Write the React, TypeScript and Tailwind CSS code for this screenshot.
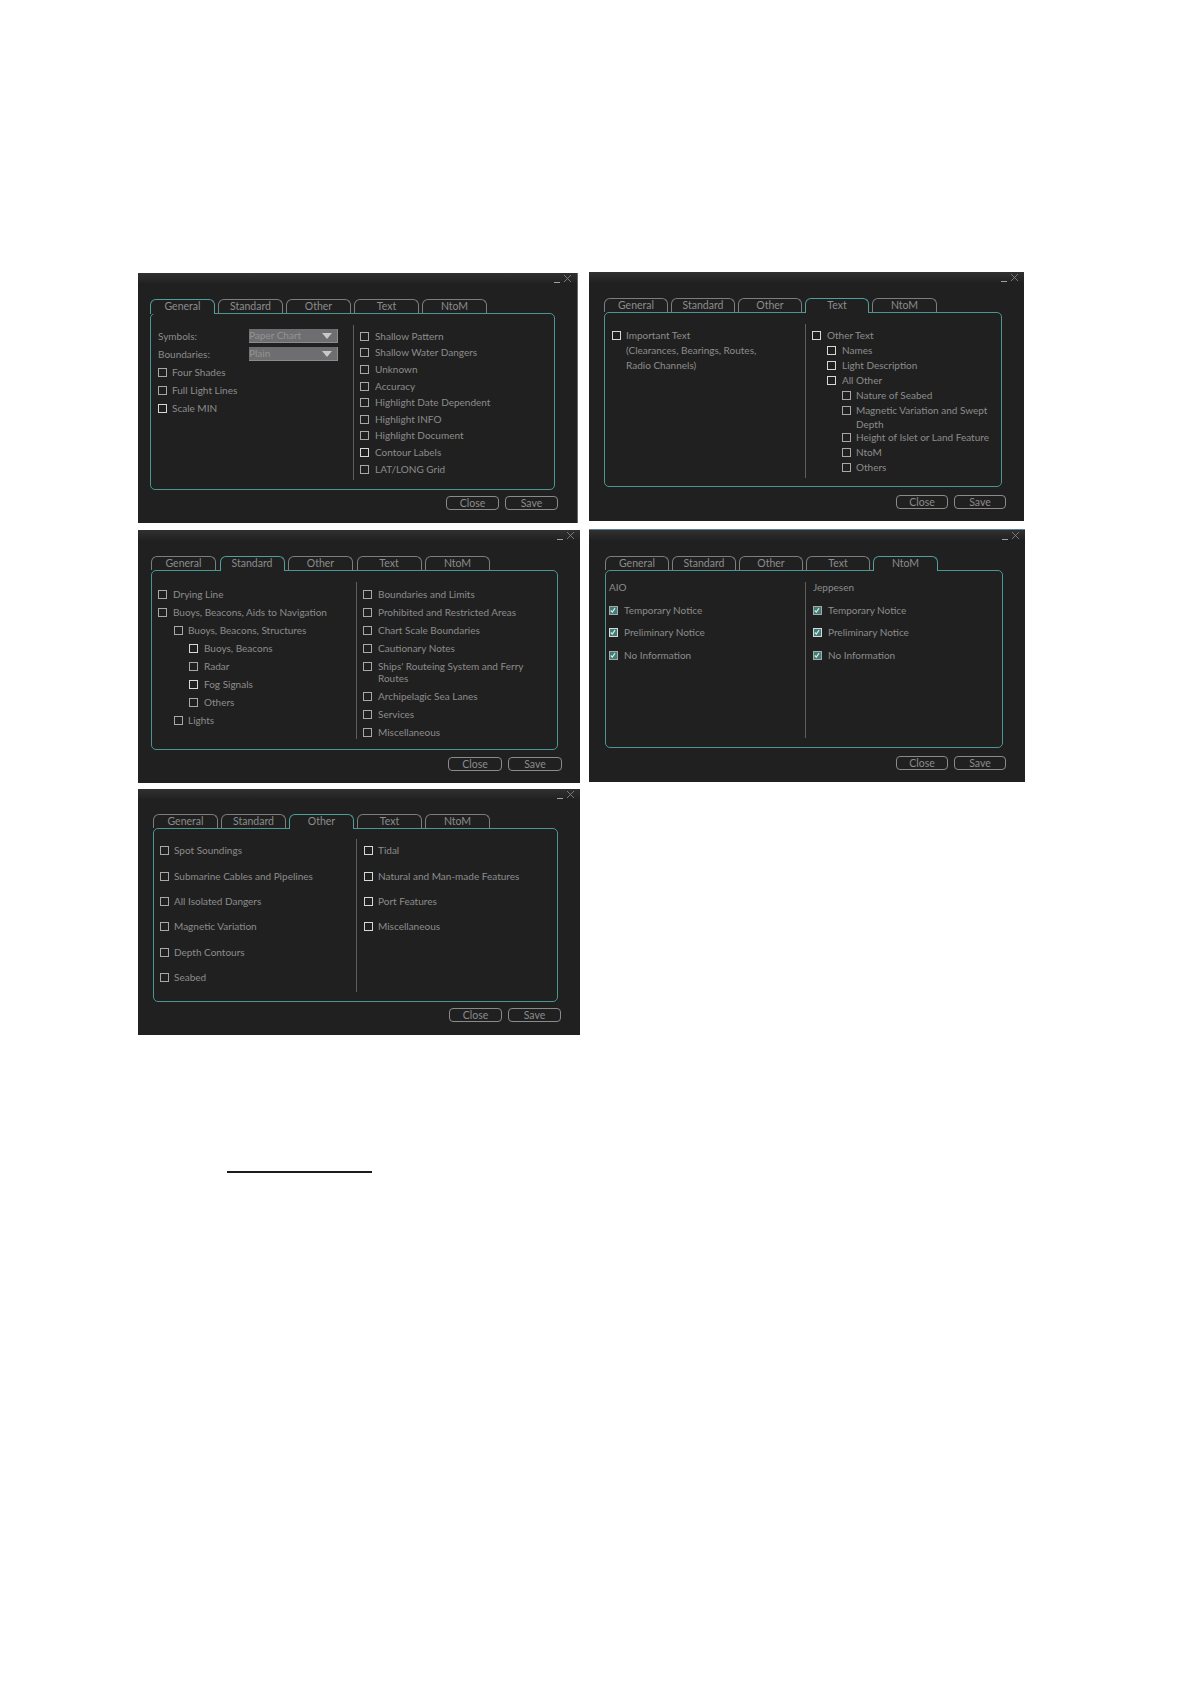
import React from "react";

const textColor = "text-[#8c8c8c]";

function Check({ on = false, bright = false }: { on?: boolean; bright?: boolean }) {
  return (
    <span className={`relative block w-[9px] h-[9px] shrink-0 border ${bright ? "border-[#d8d8d8]" : "border-[#a8a8a8]"} ${on ? "bg-[#3d7f78]" : ""}`}>
      {on && (
        <svg viewBox="0 0 9 9" className="absolute inset-0 w-[7px] h-[7px]">
          <path d="M1 4.5 L3 6.5 L6.5 1.5" fill="none" stroke="#eaeaea" strokeWidth="1.4" />
        </svg>
      )}
    </span>
  );
}

function Row({ label, className = "", on, bright }: { label: string; className?: string; on?: boolean; bright?: boolean }) {
  return (
    <div className={`flex items-center ${className}`}>
      <Check on={on} bright={bright} />
      <span className="whitespace-nowrap">{label}</span>
    </div>
  );
}

function Tab({ label, active, className }: { label: string; active: boolean; className: string }) {
  return (
    <div
      className={`h-[14px] flex items-center justify-center rounded-t-[6px] border border-b-0 bg-[#202020] text-[10.5px] leading-none ${
        active ? "relative z-10 -mb-px h-[15px] border-[#4f9f9c] pb-[2px]" : "border-[#7d7d7d] pb-px"
      } ${className}`}
    >
      {label}
    </div>
  );
}

function Panel({
  className,
  tabs,
  active,
  tabRow,
  frame,
  buttons,
  buttonGap,
  buttonW,
  children,
}: {
  className: string;
  tabs: string[];
  active: number;
  tabRow: string;
  frame: string;
  buttons: string;
  buttonGap?: string;
  buttonW: string;
  children: React.ReactNode;
}) {
  const names = ["General", "Standard", "Other", "Text", "NtoM"];
  return (
    <section className={`flex flex-col shrink-0 bg-[#202020] text-[10px] ${textColor} ${className}`}>
      <div className="h-[10px] shrink-0 bg-gradient-to-b from-[#303030] to-[#222222] flex justify-end items-end pr-[5px] text-[#9a9a9a]">
        <svg width="18" height="9" viewBox="0 0 18 9" className="block">
          <path d="M0 8.5 H6" stroke="#a0a0a0" strokeWidth="1" />
          <path d="M10 1 L17 8 M17 1 L10 8" stroke="#8c8c8c" strokeWidth="0.8" />
        </svg>
      </div>
      <div className={`flex ${tabRow}`}>
        {names.map((n, i) => (
          <Tab key={n} label={n} active={i === active} className={tabs[i]} />
        ))}
      </div>
      <div className={`flex border border-[#4a9693] rounded-[5px] ${frame}`}>{children}</div>
      <div className={`flex justify-end text-[10.5px] ${buttons} ${buttonGap ?? "gap-[6px]"}`}>
        <div className={`h-[14px] flex items-center justify-center rounded-[4px] border border-[#8a8a8a] leading-none ${buttonW}`}>Close</div>
        <div className={`h-[14px] flex items-center justify-center rounded-[4px] border border-[#8a8a8a] leading-none ${buttonW}`}>Save</div>
      </div>
    </section>
  );
}

function Select({ label }: { label: string }) {
  return (
    <div className="w-[89px] h-[14px] bg-[#6e6e70] border-b border-r border-[#8c8c8c] flex items-center justify-between pr-[5px] text-[#939393] leading-none">
      <span className="pb-[2px]">{label}</span>
      <span className="w-0 h-0 border-l-[5px] border-r-[5px] border-t-[6px] border-l-transparent border-r-transparent border-t-[#c8c8c8]" />
    </div>
  );
}

export default function App() {
  return (
    <div className="relative w-[1190px] h-[1684px] bg-white overflow-hidden font-['Lato',sans-serif]">
      <div className="pt-[272px] pl-[138px] flex gap-[11px]">
        {/* General */}
        <Panel
          className="mt-px w-[440px] h-[250px] border-r border-r-[#6a6a6a]"
          active={0}
          tabs={["w-[65px]", "w-[65px]", "w-[65px]", "w-[65px]", "w-[65px]"]}
          tabRow="mt-[16px] ml-[12px] gap-[3px]"
          frame="ml-[12px] w-[405px] h-[177px] pt-[11px]"
          buttons="mt-[6px] ml-[308px] w-[112px]"
          buttonW="w-[53px]"
        >
          <div className="w-[203px] h-[155px] border-r border-[#5e5e5e] pl-[7px] pr-[15px]">
            <div className="h-[18px] flex items-center justify-between mt-[2px]">
              <span>Symbols:</span>
              <Select label="Paper Chart" />
            </div>
            <div className="h-[18px] flex items-center justify-between">
              <span>Boundaries:</span>
              <Select label="Plain" />
            </div>
            <Row label="Four Shades" className="h-[18px] gap-[5px]" />
            <Row label="Full Light Lines" className="h-[18px] gap-[5px]" />
            <Row label="Scale MIN" className="h-[18px] gap-[5px]" bright />
          </div>
          <div className="pl-[6px] flex flex-col h-[155px] pt-[3px]">
            {["Shallow Pattern", "Shallow Water Dangers", "Unknown", "Accuracy", "Highlight Date Dependent", "Highlight INFO", "Highlight Document", "Contour Labels", "LAT/LONG Grid"].map((t) => (
              <Row key={t} label={t} className="h-[16.6px] gap-[6px]" bright={t === "Contour Labels"} />
            ))}
          </div>
        </Panel>

        {/* Text */}
        <Panel
          className="w-[435px] h-[249px]"
          active={3}
          tabs={["w-[64px]", "w-[64px]", "w-[64px]", "w-[64px]", "w-[65px]"]}
          tabRow="mt-[16px] ml-[15px] gap-[3px]"
          frame="ml-[15px] w-[398px] h-[175px] pt-[11px]"
          buttons="mt-[8px] ml-[306px] w-[111px]"
          buttonW="w-[52px]"
        >
          <div className="w-[201px] h-[154px] border-r border-[#5e5e5e] pl-[7px] pt-[4px]">
            <Row label="Important Text" className="h-[15px] gap-[5px]" bright />
            <div className="pl-[14px] h-[15px] flex items-center">(Clearances, Bearings, Routes,</div>
            <div className="pl-[14px] h-[15px] flex items-center">Radio Channels)</div>
          </div>
          <div className="pl-[6px] h-[154px] pt-[4px]">
            <Row label="Other Text" className="h-[15px] gap-[6px]" bright />
            <Row label="Names" className="h-[15px] gap-[6px] ml-[15px]" bright />
            <Row label="Light Description" className="h-[15px] gap-[6px] ml-[15px]" bright />
            <Row label="All Other" className="h-[15px] gap-[6px] ml-[15px]" bright />
            <Row label="Nature of Seabed" className="h-[15px] gap-[5px] ml-[30px]" />
            <Row label="Magnetic Variation and Swept" className="h-[15px] gap-[5px] ml-[30px]" />
            <div className="h-[12px] ml-[44px] flex items-center">Depth</div>
            <Row label="Height of Islet or Land Feature" className="h-[15px] gap-[5px] ml-[30px]" />
            <Row label="NtoM" className="h-[15px] gap-[5px] ml-[30px]" />
            <Row label="Others" className="h-[15px] gap-[5px] ml-[30px]" />
          </div>
        </Panel>
      </div>

      <div className="pl-[138px] flex gap-[9px]">
        {/* Standard */}
        <Panel
          className="mt-[7px] w-[442px] h-[253px]"
          active={1}
          tabs={["w-[65px]", "w-[65px]", "w-[65px]", "w-[65px]", "w-[65px]"]}
          tabRow="mt-[16px] ml-[13px] gap-[3.5px]"
          frame="ml-[13px] w-[407px] h-[180px] pt-[11px]"
          buttons="mt-[7px] ml-[310px] w-[114px]"
          buttonW="w-[54px]"
        >
          <div className="w-[205px] h-[157px] border-r border-[#5e5e5e] pl-[6px] pt-[3px]">
            <Row label="Drying Line" className="h-[18.1px] gap-[6px]" />
            <Row label="Buoys, Beacons, Aids to Navigation" className="h-[18.1px] gap-[6px]" />
            <Row label="Buoys, Beacons, Structures" className="h-[18.1px] gap-[5px] ml-[16px]" />
            <Row label="Buoys, Beacons" className="h-[18.1px] gap-[6px] ml-[31px]" bright />
            <Row label="Radar" className="h-[18.1px] gap-[6px] ml-[31px]" />
            <Row label="Fog Signals" className="h-[18.1px] gap-[6px] ml-[31px]" bright />
            <Row label="Others" className="h-[18.1px] gap-[6px] ml-[31px]" />
            <Row label="Lights" className="h-[18.1px] gap-[5px] ml-[16px]" />
          </div>
          <div className="pl-[6px] h-[157px] pt-[3px]">
            <Row label="Boundaries and Limits" className="h-[18.1px] gap-[6px]" />
            <Row label="Prohibited and Restricted Areas" className="h-[18.1px] gap-[6px]" />
            <Row label="Chart Scale Boundaries" className="h-[18.1px] gap-[6px]" />
            <Row label="Cautionary Notes" className="h-[18.1px] gap-[6px]" />
            <Row label="Ships' Routeing System and Ferry" className="h-[18.1px] gap-[6px]" />
            <div className="h-[12px] -mt-[3px] ml-[15px] flex items-center">Routes</div>
            <Row label="Archipelagic Sea Lanes" className="h-[18.1px] gap-[6px] mt-[3px]" />
            <Row label="Services" className="h-[18.1px] gap-[6px]" />
            <Row label="Miscellaneous" className="h-[18.1px] gap-[6px]" />
          </div>
        </Panel>

        {/* NtoM */}
        <Panel
          className="mt-[6px] w-[436px] h-[253px] border-t border-t-[#5d7f9c]"
          active={4}
          tabs={["w-[64px]", "w-[64px]", "w-[64px]", "w-[64px]", "w-[65px]"]}
          tabRow="mt-[16px] ml-[16px] gap-[3px]"
          frame="ml-[16px] w-[398px] h-[178px] pt-[11px]"
          buttons="mt-[8px] ml-[306px] w-[111px]"
          buttonW="w-[52px]"
        >
          <div className="w-[200px] h-[156px] border-r border-[#5e5e5e] pl-[3px]">
            <div className="h-[14px] -mt-[2px] flex items-center">AIO</div>
            <Row label="Temporary Notice" on className="h-[22.5px] gap-[6px] mt-[5px]" />
            <Row label="Preliminary Notice" on bright className="h-[22.5px] gap-[6px]" />
            <Row label="No Information" on className="h-[22.5px] gap-[6px]" />
          </div>
          <div className="pl-[7px] h-[156px]">
            <div className="h-[14px] -mt-[2px] flex items-center">Jeppesen</div>
            <Row label="Temporary Notice" on className="h-[22.5px] gap-[6px] mt-[5px]" />
            <Row label="Preliminary Notice" on bright className="h-[22.5px] gap-[6px]" />
            <Row label="No Information" on className="h-[22.5px] gap-[6px]" />
          </div>
        </Panel>
      </div>

      <div className="pl-[138px]">
        {/* Other */}
        <Panel
          className="mt-[6px] w-[442px] h-[246px]"
          active={2}
          tabs={["w-[65px]", "w-[65px]", "w-[65px]", "w-[65px]", "w-[65px]"]}
          tabRow="mt-[15px] ml-[15px] gap-[3px]"
          frame="ml-[15px] w-[405px] h-[174px] pt-[11px]"
          buttons="mt-[6px] ml-[311px] w-[112px]"
          buttonW="w-[53px]"
        >
          <div className="w-[203px] h-[153px] border-r border-[#5e5e5e] pl-[6px] -mt-[1px]">
            <div className="-mt-[1px]">
              {["Spot Soundings", "Submarine Cables and Pipelines", "All Isolated Dangers", "Magnetic Variation", "Depth Contours", "Seabed"].map((t) => (
                <Row key={t} label={t} className="h-[25.4px] gap-[5px]" />
              ))}
            </div>
          </div>
          <div className="pl-[7px] h-[153px] -mt-[2px]">
            {["Tidal", "Natural and Man-made Features", "Port Features", "Miscellaneous"].map((t) => (
              <Row key={t} label={t} className="h-[25.4px] gap-[5px]" bright />
            ))}
          </div>
        </Panel>
      </div>

      <div className="mt-[136px] ml-[227px] w-[145px] h-[2px] bg-[#1c1c1c]" />
    </div>
  );
}
